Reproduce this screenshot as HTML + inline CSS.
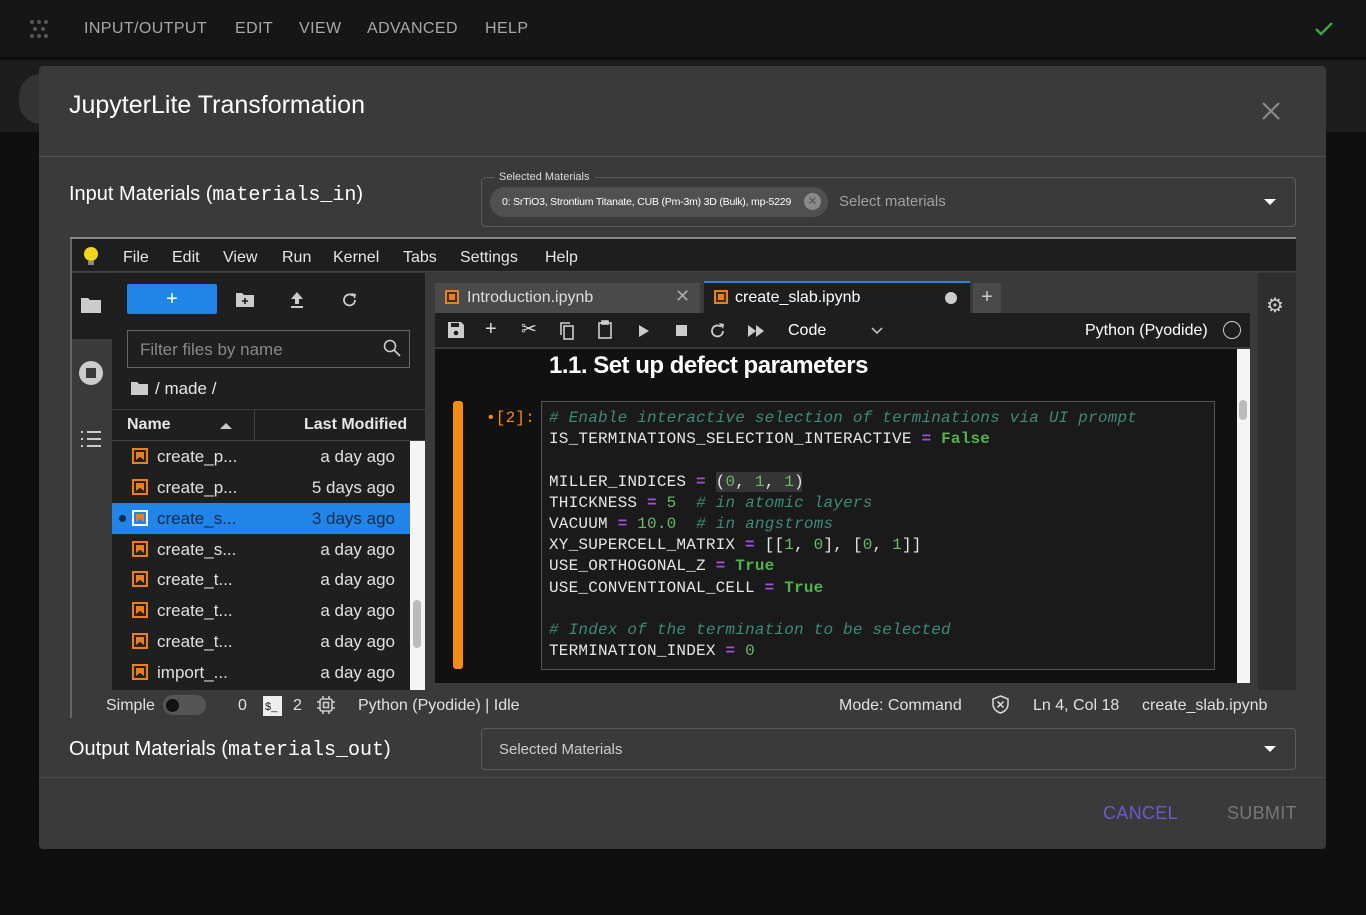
<!DOCTYPE html>
<html><head><meta charset="utf-8"><style>
*{box-sizing:border-box;margin:0;padding:0}
body{width:1366px;height:915px;background:#0f0f0f;font-family:"Liberation Sans",sans-serif;position:relative;overflow:hidden;color:#e6e6e6}
.a{position:absolute}
.top{left:0;top:0;width:1366px;height:58px;background:#161616;border-bottom:1px solid #0a0a0a}
.top span{position:absolute;top:20px;font-size:16px;color:#a8a8a8;letter-spacing:.4px}
.modal{left:39px;top:66px;width:1287px;height:783px;background:#3a3a3a;border-radius:4px}
.mono{font-family:"Liberation Mono",monospace}
.code{font-family:"Liberation Mono",monospace;font-size:16px;letter-spacing:.2px;line-height:21.2px;color:#e6e6e6;white-space:pre}
.c{color:#3e8a78;font-style:italic}.k{color:#4fb34f;font-weight:bold}.n{color:#6aba6a}.o{color:#a64fd9;font-weight:bold}
.fr{position:absolute;left:112px;width:298px;height:31px;font-size:17px;color:#e0e0e0}
.fr .ic{position:absolute;left:20px;top:7px;width:16px;height:16px;border:2px solid #f07e16;background:#222}
.fr .ic:after{content:"";position:absolute;left:2px;top:2px;width:8px;height:8px;background:#f07e16;clip-path:polygon(0 0,100% 0,100% 100%,50% 60%,0 100%)}
.fr .nm{position:absolute;left:45px;top:6px}
.fr .dt{position:absolute;right:15px;top:6px}
.mb span{position:absolute;top:9px;font-size:16px;color:#e6e6e6}
.tb{position:absolute;top:322px;color:#ddd;font-size:16px}
.sb{position:absolute;top:697px;font-size:16px;color:#e0e0e0}
</style></head><body>
<div class="a top">
 <svg class="a" style="left:28px;top:18px" width="22" height="22" viewBox="0 0 22 22" fill="#555"><circle cx="4" cy="4" r="2"/><circle cx="11" cy="4" r="2"/><circle cx="18" cy="4" r="2"/><circle cx="7" cy="11" r="2"/><circle cx="15" cy="11" r="2"/><circle cx="4" cy="18" r="2"/><circle cx="11" cy="18" r="2"/><circle cx="18" cy="18" r="2"/></svg>
 <span style="left:84px">INPUT/OUTPUT</span><span style="left:235px">EDIT</span><span style="left:299px">VIEW</span><span style="left:367px">ADVANCED</span><span style="left:485px">HELP</span>
 <svg class="a" style="left:1314px;top:20px" width="20" height="18" viewBox="0 0 20 18"><path d="M2 9l5 5L18 3" stroke="#3fa33f" stroke-width="2.5" fill="none"/></svg>
</div>
<div class="a" style="left:0;top:60px;width:1366px;height:72px;background:#1d1d1d"></div>
<div class="a" style="left:19px;top:74px;width:44px;height:50px;border-radius:25px;background:#333"></div>
<div class="a modal">
 <div class="a" style="left:30px;top:25px;font-size:25px;color:#fff">JupyterLite Transformation</div>
 <svg class="a" style="left:1222px;top:35px" width="20" height="20" viewBox="0 0 20 20"><path d="M2 2L18 18M18 2L2 18" stroke="#8a8a8a" stroke-width="2.2"/></svg>
 <div class="a" style="left:0;top:90px;width:1287px;height:1px;background:#555"></div>
 <div class="a" style="left:30px;top:117px;font-size:20px;color:#fff">Input Materials (<span class="mono">materials_in</span>)</div>
 <div class="a" style="left:442px;top:111px;width:815px;height:50px;border:1px solid #5c5c5c;border-radius:4px"></div>
 <div class="a" style="left:455px;top:105px;padding:0 5px;font-size:11px;color:#ddd;background:#3a3a3a">Selected Materials</div>
 <div class="a" style="left:451px;top:121px;width:338px;height:30px;border-radius:15px;background:#505050;font-size:10.5px;color:#fff;padding:9px 0 0 12px;letter-spacing:-.2px">0: SrTiO3, Strontium Titanate, CUB (Pm-3m) 3D (Bulk), mp-5229</div>
 <div class="a" style="left:765px;top:127px;width:17px;height:17px;border-radius:50%;background:#8a8a8a;color:#555;font-size:12px;text-align:center;line-height:17px">✕</div>
 <div class="a" style="left:800px;top:127px;font-size:15px;color:#a0a0a0">Select materials</div>
 <div class="a" style="left:1225px;top:133px;border-left:6px solid transparent;border-right:6px solid transparent;border-top:6px solid #fff"></div>
 <div class="a" style="left:30px;top:672px;font-size:20px;color:#fff">Output Materials (<span class="mono">materials_out</span>)</div>
 <div class="a" style="left:442px;top:662px;width:815px;height:42px;border:1px solid #5c5c5c;border-radius:4px"></div>
 <div class="a" style="left:460px;top:675px;font-size:15px;color:#ccc">Selected Materials</div>
 <div class="a" style="left:1225px;top:680px;border-left:6px solid transparent;border-right:6px solid transparent;border-top:6px solid #fff"></div>
 <div class="a" style="left:0;top:711px;width:1287px;height:1px;background:#4a4a4a"></div>
 <div class="a" style="left:1064px;top:737px;font-size:18px;color:#6a5acd;letter-spacing:.3px">CANCEL</div>
 <div class="a" style="left:1188px;top:737px;font-size:18px;color:#777;letter-spacing:.3px">SUBMIT</div>
</div>
<div class="a" style="left:70px;top:237px;width:1226px;height:2px;background:#888"></div>
<div class="a" style="left:70px;top:239px;width:1226px;height:33px;background:#1e1e1e;border-bottom:1px solid #444"></div>
<div class="a" style="left:70px;top:239px;width:2px;height:479px;background:#666"></div>
<div class="mb">
 <svg class="a" style="left:82px;top:246px" width="18" height="20" viewBox="0 0 18 20"><circle cx="9" cy="8" r="7" fill="#f4d51e"/><rect x="6" y="15" width="6" height="4" fill="#888"/></svg>
 <span style="left:123px;top:249px">File</span><span style="left:172px;top:249px">Edit</span><span style="left:223px;top:249px">View</span><span style="left:282px;top:249px">Run</span><span style="left:333px;top:249px">Kernel</span><span style="left:403px;top:249px">Tabs</span><span style="left:460px;top:249px">Settings</span><span style="left:545px;top:249px">Help</span>
</div>
<div class="a" style="left:72px;top:273px;width:40px;height:417px;background:#3a3a3a"></div>
<div class="a" style="left:72px;top:273px;width:40px;height:66px;background:#1e1e1e"></div>
<svg class="a" style="left:80px;top:296px" width="22" height="18" viewBox="0 0 22 18"><path d="M1 2h7l2 2h11v13H1z" fill="#ccc"/></svg>
<svg class="a" style="left:79px;top:361px" width="24" height="24" viewBox="0 0 24 24"><circle cx="12" cy="12" r="12" fill="#ccc"/><rect x="7" y="7" width="10" height="10" fill="#3a3a3a"/></svg>
<svg class="a" style="left:80px;top:430px" width="22" height="18" viewBox="0 0 22 18" stroke="#ccc" stroke-width="2"><path d="M1 2h2M7 2h14M1 9h2M7 9h14M1 16h2M7 16h14"/></svg>
<div class="a" style="left:112px;top:273px;width:313px;height:417px;background:#1f1f1f"></div>
<div class="a" style="left:127px;top:284px;width:90px;height:30px;background:#2185e8;border-radius:2px;color:#fff;text-align:center;font-size:20px;line-height:30px">+</div>
<svg class="a" style="left:235px;top:292px" width="20" height="16" viewBox="0 0 20 16"><path d="M1 1h6l2 2h10v12H1z" fill="#ccc"/><path d="M10 6v6M7 9h6" stroke="#1f1f1f" stroke-width="1.6"/></svg>
<svg class="a" style="left:289px;top:291px" width="16" height="18" viewBox="0 0 16 18"><path d="M8 1L2 8h4v5h4V8h4z" fill="#ccc"/><rect x="2" y="15" width="12" height="2" fill="#ccc"/></svg>
<svg class="a" style="left:342px;top:291px" width="16" height="18" viewBox="0 0 16 18"><path d="M13 9a5.5 5.5 0 1 1-2-4.3" stroke="#ccc" stroke-width="1.8" fill="none"/><path d="M9 2l5 1-1 5z" fill="#ccc"/></svg>
<div class="a" style="left:127px;top:330px;width:283px;height:38px;border:1px solid #666"></div>
<div class="a" style="left:140px;top:340px;font-size:17px;color:#888">Filter files by name</div>
<svg class="a" style="left:383px;top:339px" width="18" height="18" viewBox="0 0 18 18"><circle cx="7" cy="7" r="5.5" stroke="#ccc" stroke-width="1.6" fill="none"/><path d="M11 11l6 6" stroke="#ccc" stroke-width="1.8"/></svg>
<svg class="a" style="left:131px;top:381px" width="17" height="14" viewBox="0 0 17 14"><path d="M0 1h6l2 2h9v11H0z" fill="#ccc"/></svg>
<div class="a" style="left:155px;top:379px;font-size:17px">/ made /</div>
<div class="a" style="left:112px;top:409px;width:313px;height:1px;background:#3a3a3a"></div>
<div class="a" style="left:112px;top:440px;width:313px;height:1px;background:#444"></div>
<div class="a" style="left:254px;top:410px;width:1px;height:30px;background:#444"></div>
<div class="a" style="left:127px;top:416px;font-size:16px;font-weight:bold">Name</div>
<div class="a" style="left:220px;top:423px;border-left:6px solid transparent;border-right:6px solid transparent;border-bottom:6px solid #ccc"></div>
<div class="a" style="left:304px;top:416px;font-size:16px;font-weight:bold">Last Modified</div>
<div class="a" style="left:410px;top:441px;width:15px;height:249px;background:#f5f5f5"></div>
<div class="a" style="left:413px;top:600px;width:8px;height:48px;background:#bbb;border-radius:4px"></div>
<div class="fr" style="top:441px"><i class="ic"></i><span class="nm">create_p...</span><span class="dt">a day ago</span></div>
<div class="fr" style="top:472px"><i class="ic"></i><span class="nm">create_p...</span><span class="dt">5 days ago</span></div>
<div class="fr" style="top:503px;background:#2185e8;color:#102a48"><span class="a" style="left:7px;top:12px;width:7px;height:7px;border-radius:50%;background:#102a48"></span><i class="ic" style="border-color:#fff;background:#2185e8"></i><span class="nm">create_s...</span><span class="dt">3 days ago</span></div>
<div class="fr" style="top:534px"><i class="ic"></i><span class="nm">create_s...</span><span class="dt">a day ago</span></div>
<div class="fr" style="top:564px"><i class="ic"></i><span class="nm">create_t...</span><span class="dt">a day ago</span></div>
<div class="fr" style="top:595px"><i class="ic"></i><span class="nm">create_t...</span><span class="dt">a day ago</span></div>
<div class="fr" style="top:626px"><i class="ic"></i><span class="nm">create_t...</span><span class="dt">a day ago</span></div>
<div class="fr" style="top:657px"><i class="ic"></i><span class="nm">import_...</span><span class="dt">a day ago</span></div>
<div class="a" style="left:425px;top:273px;width:833px;height:417px;background:#3a3a3a"></div>
<div class="a" style="left:435px;top:283px;width:265px;height:30px;background:#4a4a4a"></div>
<i class="a" style="left:445px;top:290px;width:14px;height:14px;border:2px solid #f07e16;background:#f07e16;box-shadow:inset 0 0 0 2px #333"></i>
<div class="a" style="left:467px;top:289px;font-size:16px;color:#ddd">Introduction.ipynb</div>
<div class="a" style="left:675px;top:286px;font-size:18px;color:#aaa">✕</div>
<div class="a" style="left:704px;top:281px;width:266px;height:32px;background:#1e1e1e;border-top:2px solid #2185e8"></div>
<i class="a" style="left:714px;top:290px;width:14px;height:14px;border:2px solid #f07e16;background:#f07e16;box-shadow:inset 0 0 0 2px #333"></i>
<div class="a" style="left:735px;top:289px;font-size:16px;color:#fff">create_slab.ipynb</div>
<div class="a" style="left:945px;top:292px;width:12px;height:12px;border-radius:50%;background:#ccc"></div>
<div class="a" style="left:973px;top:283px;width:28px;height:30px;background:#4a4a4a;color:#ccc;font-size:20px;text-align:center;line-height:28px">+</div>
<div class="a" style="left:435px;top:313px;width:815px;height:35px;background:#1e1e1e;border-bottom:1px solid #3a3a3a"></div>
<svg class="a" style="left:447px;top:321px" width="18" height="18" viewBox="0 0 18 18"><path d="M1 1h13l3 3v13H1z" fill="#ccc"/><rect x="4" y="2" width="8" height="4" fill="#1e1e1e"/><circle cx="9" cy="12" r="2.3" fill="#1e1e1e"/></svg>
<div class="tb" style="left:485px;top:318px;font-size:20px">+</div>
<div class="tb" style="left:521px;top:318px;font-size:19px">✂</div>
<svg class="a" style="left:559px;top:321px" width="16" height="19" viewBox="0 0 16 19" stroke="#ccc" stroke-width="1.6" fill="none"><rect x="5" y="5" width="9" height="13"/><path d="M2 14V2h9"/></svg>
<svg class="a" style="left:597px;top:320px" width="16" height="19" viewBox="0 0 16 19" stroke="#ccc" stroke-width="1.6" fill="none"><rect x="2" y="3" width="12" height="15"/><rect x="5" y="1" width="6" height="3" fill="#ccc"/></svg>
<div class="a" style="left:639px;top:325px;border-top:6px solid transparent;border-bottom:6px solid transparent;border-left:10px solid #ccc"></div>
<div class="a" style="left:676px;top:325px;width:11px;height:11px;background:#ccc"></div>
<svg class="a" style="left:709px;top:321px" width="17" height="18" viewBox="0 0 17 18"><path d="M14 10a5.5 5.5 0 1 1-2-4.3" stroke="#ccc" stroke-width="1.8" fill="none"/><path d="M10 2l5 1-1 5z" fill="#ccc"/></svg>
<div class="a" style="left:748px;top:325px;border-top:6px solid transparent;border-bottom:6px solid transparent;border-left:8px solid #ccc"></div>
<div class="a" style="left:756px;top:325px;border-top:6px solid transparent;border-bottom:6px solid transparent;border-left:8px solid #ccc"></div>
<div class="a" style="left:788px;top:322px;font-size:16px;color:#fff">Code</div>
<svg class="a" style="left:871px;top:327px" width="12" height="8" viewBox="0 0 12 8"><path d="M1 1l5 5 5-5" stroke="#ccc" stroke-width="1.5" fill="none"/></svg>
<div class="a" style="left:1085px;top:322px;font-size:16px;color:#fff">Python (Pyodide)</div>
<div class="a" style="left:1223px;top:321px;width:18px;height:18px;border:1.5px solid #ccc;border-radius:50%"></div>
<div class="a" style="left:435px;top:349px;width:815px;height:334px;background:#111"></div>
<div class="a" style="left:1237px;top:349px;width:13px;height:334px;background:#f5f5f5"></div>
<div class="a" style="left:1239px;top:400px;width:8px;height:20px;background:#bbb;border-radius:4px"></div>
<div class="a" style="left:549px;top:352px;font-size:24px;color:#fff;font-weight:bold;letter-spacing:-.5px">1.1. Set up defect parameters</div>
<div class="a" style="left:453px;top:401px;width:10px;height:268px;background:#f68b12;border-radius:3px"></div>
<div class="a code" style="left:486px;top:408px;color:#f68b12">•[2]:</div>
<div class="a" style="left:541px;top:401px;width:674px;height:269px;background:#1a1a1a;border:1px solid #555"></div>
<div class="a" style="left:716px;top:472px;width:86px;height:20px;background:#353535"></div>
<div class="a code" style="left:549px;top:408px"><span class="c"># Enable interactive selection of terminations via UI prompt</span>
IS_TERMINATIONS_SELECTION_INTERACTIVE <span class="o">=</span> <span class="k">False</span>

MILLER_INDICES <span class="o">=</span> (<span class="n">0</span>, <span class="n">1</span>, <span class="n">1</span>)
THICKNESS <span class="o">=</span> <span class="n">5</span>  <span class="c"># in atomic layers</span>
VACUUM <span class="o">=</span> <span class="n">10.0</span>  <span class="c"># in angstroms</span>
XY_SUPERCELL_MATRIX <span class="o">=</span> [[<span class="n">1</span>, <span class="n">0</span>], [<span class="n">0</span>, <span class="n">1</span>]]
USE_ORTHOGONAL_Z <span class="o">=</span> <span class="k">True</span>
USE_CONVENTIONAL_CELL <span class="o">=</span> <span class="k">True</span>

<span class="c"># Index of the termination to be selected</span>
TERMINATION_INDEX <span class="o">=</span> <span class="n">0</span></div>
<div class="a" style="left:1258px;top:273px;width:38px;height:417px;background:#2e2e2e"></div>
<div class="a" style="left:1266px;top:293px;font-size:20px;color:#ccc">⚙</div>
<div class="sb" style="left:106px">Simple</div>
<div class="a" style="left:163px;top:695px;width:43px;height:20px;border-radius:10px;background:#555"></div>
<div class="a" style="left:166px;top:699px;width:13px;height:13px;border-radius:50%;background:#111"></div>
<div class="sb" style="left:238px">0</div>
<div class="a" style="left:263px;top:696px;width:19px;height:20px;background:#eee;color:#222;font-size:11px;padding:5px 0 0 2px">$_</div>
<div class="sb" style="left:293px">2</div>
<svg class="a" style="left:317px;top:696px" width="18" height="18" viewBox="0 0 18 18" stroke="#ccc" stroke-width="1.6" fill="none"><rect x="3" y="3" width="12" height="12" rx="2"/><rect x="6.5" y="6.5" width="5" height="5"/><path d="M6 0v3M12 0v3M6 15v3M12 15v3M0 6h3M0 12h3M15 6h3M15 12h3"/></svg>
<div class="sb" style="left:358px">Python (Pyodide) | Idle</div>
<div class="sb" style="left:839px">Mode: Command</div>
<svg class="a" style="left:991px;top:695px" width="19" height="19" viewBox="0 0 19 19" stroke="#ddd" stroke-width="1.5" fill="none"><path d="M9.5 1L17 4v5c0 5-4 8-7.5 9C6 17 2 14 2 9V4z"/><path d="M6.5 6.5l6 6M12.5 6.5l-6 6"/></svg>
<div class="sb" style="left:1033px">Ln 4, Col 18</div>
<div class="sb" style="left:1142px">create_slab.ipynb</div>
</body></html>
